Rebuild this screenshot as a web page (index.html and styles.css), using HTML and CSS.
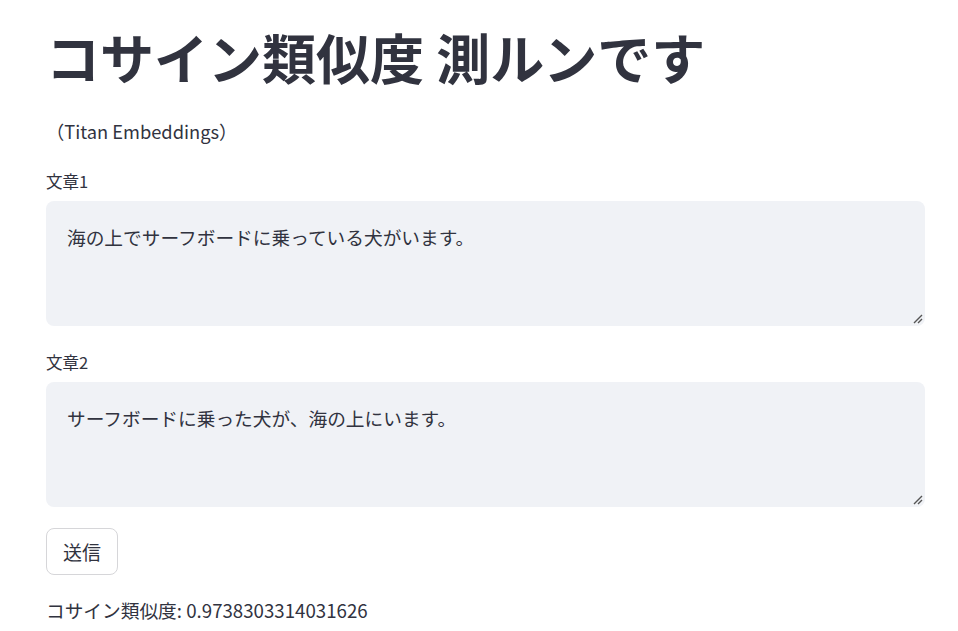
FILE: index.html
```html
<!DOCTYPE html>
<html lang="ja">
<head>
<meta charset="utf-8">
<link rel="stylesheet" href="styles.css">
</head>
<body>
<main class="main">
  <h1 class="title">コサイン類似度 測ルンです</h1>
  <p class="subtitle">（Titan Embeddings）</p>
  <div class="field">
    <label class="label">文章1</label>
    <div class="area">
      <div class="area-text">海の上でサーフボードに乗っている犬がいます。</div>
      <svg class="grip" width="10" height="10" viewBox="0 0 10 10"><path d="M1 9 L9 1 M5 9 L9 5" stroke="#555" stroke-width="1.4" fill="none"/></svg>
    </div>
  </div>
  <div class="field">
    <label class="label">文章2</label>
    <div class="area">
      <div class="area-text">サーフボードに乗った犬が、海の上にいます。</div>
      <svg class="grip" width="10" height="10" viewBox="0 0 10 10"><path d="M1 9 L9 1 M5 9 L9 5" stroke="#555" stroke-width="1.4" fill="none"/></svg>
    </div>
  </div>
  <button class="btn">送信</button>
  <p class="result">コサイン類似度: 0.9738303314031626</p>
</main>
</body>
</html>
```
FILE: styles.css
```css
html, body {
  margin: 0;
  padding: 0;
  background: #ffffff;
}
body {
  font-family: "Noto Sans CJK JP", "Noto Sans", sans-serif;
  color: #31333f;
}
.main {
  padding: 17px 33px 0 46px;
  display: flex;
  flex-direction: column;
  align-items: flex-start;
}
.title {
  margin: 0;
  font-size: 54px;
  font-weight: 700;
  line-height: 80px;
  letter-spacing: 0;
}
.subtitle {
  margin: 20px 0 0 0;
  font-size: 18.3px;
  line-height: 28px;
}
.field {
  width: 100%;
  display: flex;
  flex-direction: column;
}
.field + .field { margin-top: 24px; }
.subtitle + .field { margin-top: 24px; }
.label {
  font-size: 16.5px;
  line-height: 24px;
  margin-bottom: 8px;
}
.area {
  position: relative;
  height: 125px;
  background: #f0f2f6;
  border-radius: 8px;
  box-sizing: border-box;
  padding: 22px 21px;
}
.area-text {
  font-size: 18.7px;
  line-height: 28px;
}
.grip {
  position: absolute;
  right: 2px;
  bottom: 2px;
}
.btn {
  margin-top: 21px;
  font-family: inherit;
  font-size: 19px;
  color: #31333f;
  background: #fff;
  border: 1px solid #d6d6d9;
  border-radius: 8px;
  height: 47px;
  width: 72px;
  padding: 0;
}
.result {
  margin: 21px 0 0 0;
  font-size: 18.7px;
  line-height: 28px;
}
```
